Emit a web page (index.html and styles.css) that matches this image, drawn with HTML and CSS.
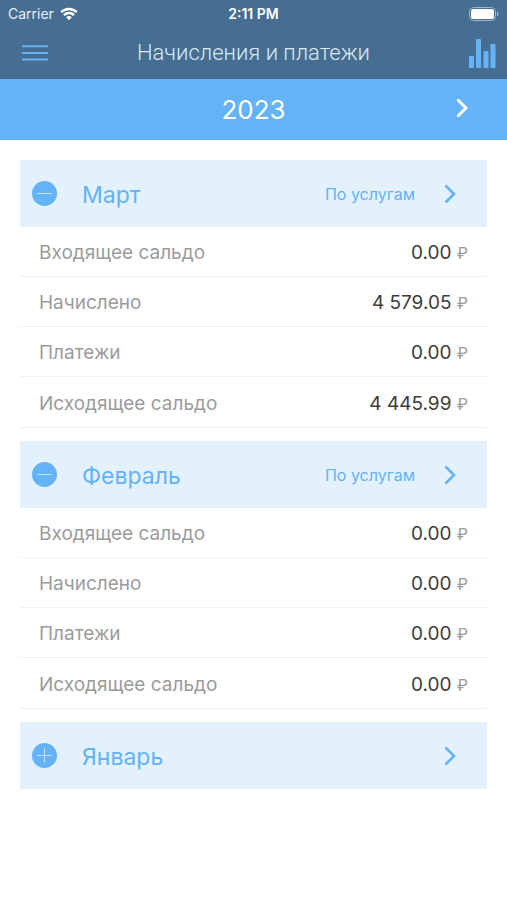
FILE: index.html
```html
<!DOCTYPE html>
<html lang="ru">
<head>
<meta charset="utf-8">
<meta name="viewport" content="width=device-width, initial-scale=1">
<title>Начисления и платежи</title>
<link rel="stylesheet" href="styles.css">
</head>
<body>
<header class="top">
  <div class="status">
    <span class="carrier">Carrier
      <svg class="wifi" viewBox="0 0 18 14" aria-hidden="true"><path d="M1.2 5.2a11 11 0 0 1 15.6 0M4 8.1a7 7 0 0 1 10 0"/><path class="dot" d="M9 13.2 6.2 10.3a4 4 0 0 1 5.6 0z"/></svg>
    </span>
    <span class="clock">2:11 PM</span>
    <svg class="battery" viewBox="0 0 30 14" aria-hidden="true"><rect class="case" x=".5" y=".5" width="26" height="13" rx="4"/><rect class="charge" x="2" y="2" width="23" height="10" rx="2.5"/><path class="tip" d="M28 4.5c2 .8 2 4.2 0 5z"/></svg>
  </div>
  <nav class="bar">
    <button class="icon-button" type="button" aria-label="Меню">
      <svg class="menu" viewBox="0 0 26 16"><path d="M0 1.2h26M0 8h26M0 14.6h26"/></svg>
    </button>
    <h1 class="title">Начисления и платежи</h1>
    <button class="icon-button" type="button" aria-label="Графики">
      <svg class="chart" viewBox="0 0 27 29"><rect y="17" width="5" height="12" rx="1"/><rect x="7" width="5" height="29" rx="1"/><rect x="14.500" y="12" width="5" height="17" rx="1"/><rect x="21.500" y="5" width="5" height="24" rx="1"/></svg>
    </button>
  </nav>
</header>
<div class="year">
  <h2 class="year-label">2023</h2>
  <button class="icon-button" type="button" aria-label="Следующий год">
    <svg class="chevron large" viewBox="0 0 12 20"><path d="M1.500 1.500 10 10l-8.500 8.500"/></svg>
  </button>
</div>
<main class="months">
  <section class="month">
    <div class="month-head">
      <button class="icon-button" type="button" aria-label="Свернуть март" aria-expanded="true"><svg class="toggle" viewBox="0 0 24 24"><circle cx="12" cy="12" r="12"/><path d="M5 12h14"/></svg></button>
      <h3 class="month-name">Март</h3>
      <a class="details" href="#mart">По услугам <svg class="chevron" viewBox="0 0 12 20"><path d="M1.500 1.500 10 10l-8.500 8.500"/></svg></a>
    </div>
    <table class="sums" id="mart">
      <tr><th scope="row">Входящее сальдо</th><td>0.00 <span class="rub">₽</span></td></tr>
      <tr><th scope="row">Начислено</th><td>4 579.05 <span class="rub">₽</span></td></tr>
      <tr><th scope="row">Платежи</th><td>0.00 <span class="rub">₽</span></td></tr>
      <tr class="closing"><th scope="row">Исходящее сальдо</th><td>4 445.99 <span class="rub">₽</span></td></tr>
    </table>
  </section>
  <section class="month">
    <div class="month-head">
      <button class="icon-button" type="button" aria-label="Свернуть февраль" aria-expanded="true"><svg class="toggle" viewBox="0 0 24 24"><circle cx="12" cy="12" r="12"/><path d="M5 12h14"/></svg></button>
      <h3 class="month-name">Февраль</h3>
      <a class="details" href="#fevral">По услугам <svg class="chevron" viewBox="0 0 12 20"><path d="M1.500 1.500 10 10l-8.500 8.500"/></svg></a>
    </div>
    <table class="sums" id="fevral">
      <tr><th scope="row">Входящее сальдо</th><td>0.00 <span class="rub">₽</span></td></tr>
      <tr><th scope="row">Начислено</th><td>0.00 <span class="rub">₽</span></td></tr>
      <tr><th scope="row">Платежи</th><td>0.00 <span class="rub">₽</span></td></tr>
      <tr class="closing"><th scope="row">Исходящее сальдо</th><td>0.00 <span class="rub">₽</span></td></tr>
    </table>
  </section>
  <section class="month">
    <div class="month-head" id="yanvar">
      <button class="icon-button" type="button" aria-label="Развернуть январь" aria-expanded="false"><svg class="toggle" viewBox="0 0 24 24"><circle cx="12" cy="12" r="12"/><path d="M5 12h14M12 5v14"/></svg></button>
      <h3 class="month-name">Январь</h3>
      <a class="details" href="#yanvar" aria-label="Январь по услугам"><svg class="chevron" viewBox="0 0 12 20"><path d="M1.500 1.500 10 10l-8.500 8.500"/></svg></a>
    </div>
  </section>
</main>
</body>
</html>
```
FILE: styles.css
```css
* {
  box-sizing: border-box;
}

body {
  margin: 0;
  background: #fff;
  color: #3c3c3c;
  font-family: Inter, "Noto Sans", sans-serif;
}

h1, h2, h3 {
  margin: 0;
  font-weight: 400;
}

svg {
  display: block;
  flex: none;
}

.icon-button {
  display: flex;
  padding: 0;
  border: 0;
  background: none;
  color: inherit;
}

.top {
  background: #466e92;
  color: #fff;
}

.status {
  display: grid;
  grid-template-columns: 1fr auto 1fr;
  align-items: center;
  height: 27px;
  padding: 0 8px;
  font-size: 14px;
}

.carrier {
  display: flex;
  align-items: center;
  gap: 6px;
  color: #e6edf3;
}

.wifi {
  width: 18px;
  height: 14px;
  fill: none;
  stroke: #fff;
  stroke-width: 2.4;
}

.wifi .dot {
  fill: #fff;
  stroke: none;
}

.clock {
  font-weight: 600;
}

.battery {
  justify-self: end;
  width: 30px;
  height: 14px;
}

.battery .case {
  fill: none;
  stroke: #a2b6c8;
}

.battery .charge {
  fill: #fff;
}

.battery .tip {
  fill: #a2b6c8;
}

.bar {
  display: grid;
  grid-template-columns: 1fr auto 1fr;
  align-items: center;
  height: 52px;
  padding: 0 11px;
  color: #64b3f6;
}

.bar .icon-button:first-child {
  padding-left: 11px;
}

.bar .icon-button:last-child {
  justify-self: end;
}

.title {
  color: #dfe8f0;
  font: 300 22px/26px Roboto, sans-serif;
}

.menu {
  width: 26px;
  height: 16px;
  stroke: currentColor;
  stroke-width: 2;
}

.chart {
  width: 27px;
  height: 29px;
  fill: currentColor;
}

.year {
  display: grid;
  grid-template-columns: 1fr auto 1fr;
  align-items: center;
  height: 61px;
  padding: 0 39px;
  background: #64b3f6;
  color: #fff;
}

.year-label {
  grid-column: 2;
  font-size: 26px;
}

.year .icon-button {
  justify-self: end;
  padding-bottom: 4px;
}

.chevron {
  width: 12px;
  height: 20px;
  fill: none;
  stroke: currentColor;
  stroke-width: 2.6;
}

.chevron.large {
  stroke-width: 3;
}

.months {
  display: grid;
  gap: 13px;
  padding: 20px;
}

.month-head {
  display: flex;
  align-items: center;
  height: 67px;
  padding: 0 31px 0 12px;
  background: #e3f1fd;
  color: #64b3f6;
}

.toggle {
  width: 25px;
  height: 25px;
  fill: currentColor;
  stroke: #c4e2fc;
}

.toggle circle {
  stroke: none;
}

.month-name {
  flex: 1;
  padding: 2px 0 0 25px;
  font-size: 23px;
}

.details {
  display: flex;
  align-items: center;
  gap: 29px;
  color: inherit;
  font-size: 16px;
  text-decoration: none;
}

.sums {
  width: 100%;
  border-spacing: 0;
  font-size: 19px;
}

.sums th,
.sums td {
  height: 50px;
  padding: 2px 19px 0;
  border-bottom: 1px solid #f2f2f2;
  text-align: right;
}

.sums th {
  color: #9b9b9b;
  font-weight: 400;
  text-align: left;
}

.sums .closing th,
.sums .closing td {
  height: 51px;
}

.rub {
  color: #9b9b9b;
  font-size: 16px;
}
```
